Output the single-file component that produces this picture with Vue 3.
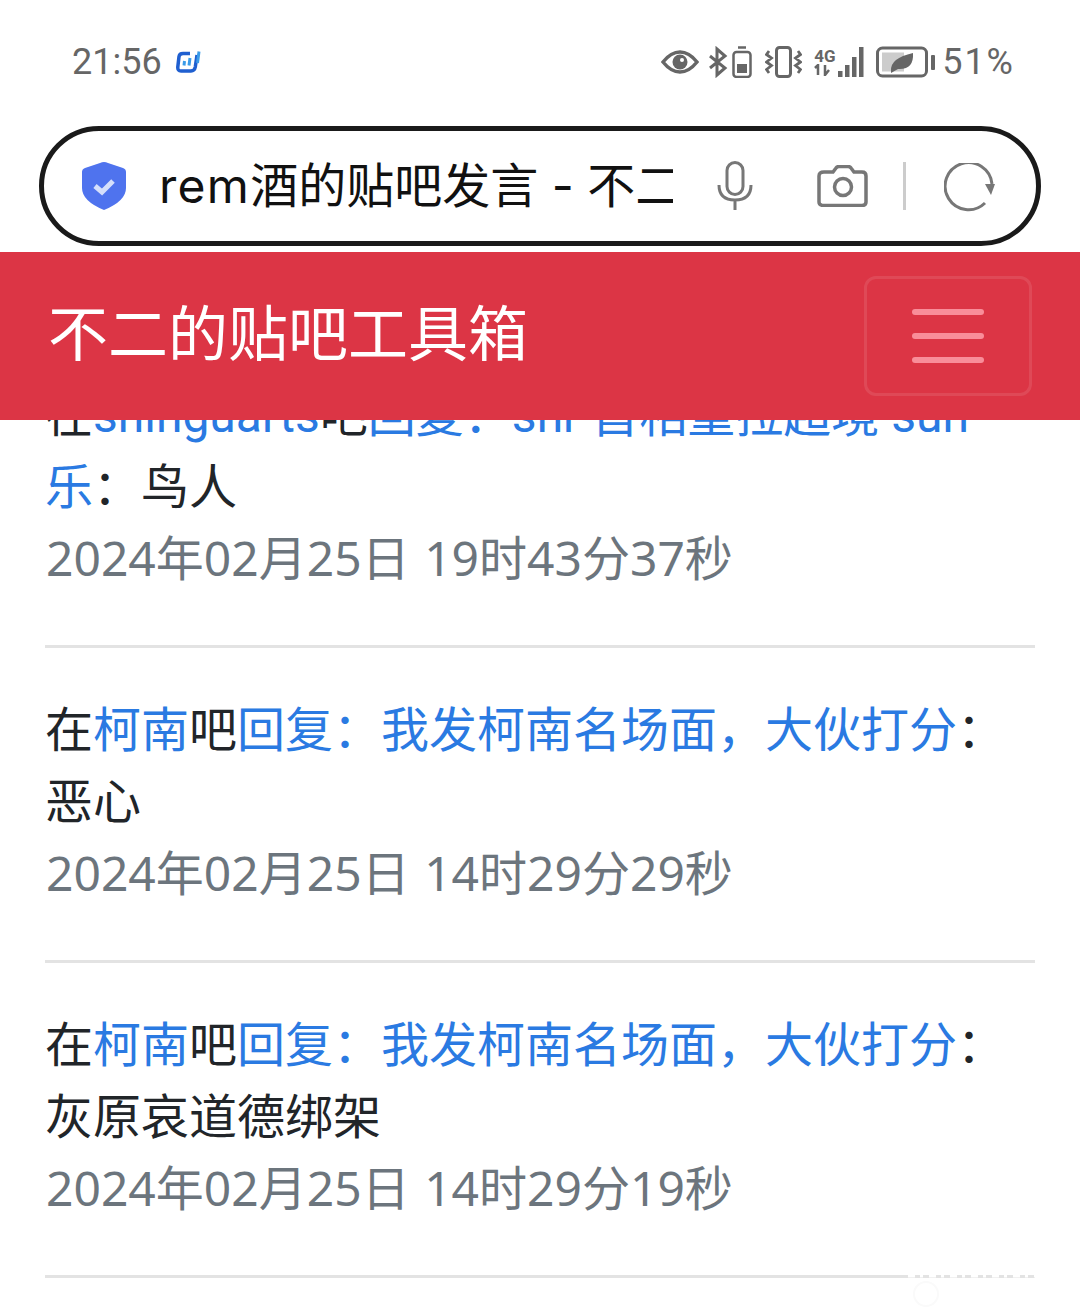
<template>
  <div class="page">
    <div class="status">
      <div class="status-left">
        <span class="time">21:56</span>
        <svg class="app-ic" width="25" height="24" viewBox="0 0 25 24" fill="none">
          <path d="M14 3.500H7Q3.500 3.500 3 6.500L1.800 17Q1.500 21 5 21H15Q18.500 21 19.300 17L21 5" stroke="#1f5fd0" stroke-width="3.500"/>
          <path d="M8.500 11L8 15.500M14 8L13 15.500" stroke="#3a9be8" stroke-width="3"/>
          <path d="M23 1.500L21.500 13" stroke="#3a9be8" stroke-width="3"/>
        </svg>
      </div>
      <div class="status-right">
        <svg width="38" height="26" viewBox="0 0 38 26" fill="none">
          <path d="M2 13Q10 3 19 3T36 13Q28 23 19 23T2 13z" stroke="#666" stroke-width="3.500"/>
          <circle cx="19" cy="13" r="7.500" fill="#666"/>
          <circle cx="21" cy="11" r="2" fill="#fff"/>
        </svg>
        <svg class="ic-bt" width="20" height="32" viewBox="0 0 20 32" fill="none">
          <path d="M2 10l15 12-8 7V3l8 7L2 22" stroke="#666" stroke-width="3"/>
        </svg>
        <svg class="ic-batt" width="20" height="32" viewBox="0 0 20 32" fill="none">
          <path d="M6 1.500h8" stroke="#666" stroke-width="2.500"/>
          <rect x="1.500" y="6" width="17" height="25" rx="3" stroke="#666" stroke-width="2.500"/>
          <rect x="5" y="18" width="10" height="9" fill="#666"/>
        </svg>
        <svg class="ic-vib" width="37" height="32" viewBox="0 0 37 32" fill="none">
          <rect x="11.500" y="1.500" width="14" height="29" rx="3" stroke="#666" stroke-width="3"/>
          <path d="M4 5L1.500 8.500l5 3.500-5 4 5 3.500-5 4L4 27M33 5l2.500 3.500-5 3.500 5 4-5 3.500 5 4L33 27" stroke="#666" stroke-width="2.800"/>
        </svg>
        <div class="signal">
          <div class="net">
            <span class="net-4g">4G</span>
            <svg width="20" height="12" viewBox="0 0 20 12" fill="none">
              <path d="M4 11V1L1 4M11 1v10l4-5" stroke="#666" stroke-width="2.500"/>
            </svg>
          </div>
          <svg class="bars" width="26" height="32" viewBox="0 0 26 32" fill="#666">
            <rect x="0" y="25" width="4.500" height="6"/>
            <rect x="7" y="19" width="4.500" height="12"/>
            <rect x="14" y="11" width="4.500" height="20"/>
            <rect x="21" y="1" width="4.500" height="30"/>
          </svg>
        </div>
        <svg class="ic-power" width="60" height="32" viewBox="0 0 60 32" fill="none">
          <rect x="1.500" y="2" width="49" height="28" rx="5" stroke="#666" stroke-width="3"/>
          <rect x="6" y="6.500" width="22" height="19" fill="#ccc"/>
          <path d="M15 25Q14 12 37 7 38 24 22 23L15 27z" fill="#666"/>
          <rect x="55" y="9" width="4" height="15" rx="1" fill="#666"/>
        </svg>
        <span class="pct">51%</span>
      </div>
    </div>
    <div class="addr-wrap">
      <div class="addr">
        <svg class="shield" width="46" height="50" viewBox="0 0 46 50">
          <path d="M23 1Q25 1 27 2L42 7Q45 8 45 11V27Q45 40 23 49Q1 40 1 27V11Q1 8 4 7L19 2Q21 1 23 1z" fill="#4f73ee"/>
          <path d="M14 25l7 6 11-11" fill="none" stroke="#d5dffb" stroke-width="5"/>
        </svg>
        <div class="addr-text"><span class="latin">rem</span>酒的贴吧发言 - 不二的贴吧工具箱</div>
        <svg class="mic" width="36" height="50" viewBox="0 0 36 50" fill="none">
          <rect x="10" y="1.500" width="16" height="32" rx="8" stroke="#777" stroke-width="3"/>
          <path d="M2 24q0 15 16 15t16-15M18 39v10" stroke="#777" stroke-width="3"/>
        </svg>
        <svg class="cam" width="52" height="42" viewBox="0 0 52 42" fill="none">
          <path d="M7 7h9l3-4q1-1.500 3-1.500h9q2 0 3 1.500l3 4h8q4 0 4 4v26q0 3.500-4 3.500H7q-5 0-5-3.500V11q0-4 5-4z" stroke="#777" stroke-width="3.500"/>
          <circle cx="26" cy="22" r="8.500" stroke="#777" stroke-width="3.500"/>
        </svg>
        <div class="sep"></div>
        <svg class="reload" width="52" height="50" viewBox="0 0 52 50" fill="none">
          <path d="M41 40A23.500 23.500 0 1 1 48 21" stroke="#777" stroke-width="3"/>
          <path d="M41 21h10l-4 11z" fill="#777"/>
        </svg>
      </div>
    </div>
    <nav class="navbar">
      <span class="brand">不二的贴吧工具箱</span>
      <button class="toggler">
        <span class="bar"></span>
        <span class="bar"></span>
        <span class="bar"></span>
      </button>
    </nav>
    <div class="list">
      <div v-for="(item, i) in items" :key="i" class="item">
        <div class="body">在<a>{{ item.forum }}</a>吧<a>回复：{{ item.title }}</a>：{{ item.text }}</div>
        <div class="date">{{ item.date }}</div>
      </div>
    </div>
    <svg class="mark" width="130" height="40" viewBox="0 0 130 40" fill="none">
      <path d="M0 2H127" stroke="#fff" stroke-width="3" stroke-dasharray="7 5 3 6"/>
      <circle cx="18" cy="20" r="12" stroke="#fafafa" stroke-width="2"/>
    </svg>
  </div>
</template>

<script setup>
const items = [
  { forum: 'shinguarts', title: 'shr 首相重拉超境 sun乐', text: '鸟人', date: '2024年02月25日 19时43分37秒' },
  { forum: '柯南', title: '我发柯南名场面，大伙打分', text: '恶心', date: '2024年02月25日 14时29分29秒' },
  { forum: '柯南', title: '我发柯南名场面，大伙打分', text: '灰原哀道德绑架', date: '2024年02月25日 14时29分19秒' }
]
</script>

<style>
html, body {
  margin: 0;
  background: #fff;
}
</style>

<style scoped>
.page {
  position: relative;
  width: 1080px;
  height: 1313px;
  overflow: hidden;
  background: #fff;
  font-family: Roboto, "Noto Sans CJK SC", sans-serif;
}

.status {
  height: 126px;
  box-sizing: border-box;
  padding: 40px 65px 0 72px;
  display: flex;
  justify-content: space-between;
  align-items: flex-start;
}

.status-left {
  display: flex;
  align-items: center;
  height: 44px;
  gap: 14px;
}

.time {
  font-size: 36px;
  color: #666;
}

.status-right {
  display: flex;
  align-items: center;
  height: 44px;
}

.ic-bt {
  margin-left: 9px;
}

.ic-batt {
  margin-left: 4px;
}

.ic-vib {
  margin-left: 13px;
}

.signal {
  display: flex;
  align-items: center;
  margin-left: 12px;
}

.net {
  width: 22px;
  display: flex;
  flex-direction: column;
  align-items: flex-start;
  line-height: 16px;
}

.net-4g {
  font-size: 17px;
  font-weight: 700;
  color: #666;
}

.bars {
  margin-left: 2px;
}

.ic-power {
  margin-left: 12px;
}

.pct {
  font-size: 36px;
  color: #666;
  margin-left: 6px;
  letter-spacing: 2px;
}

.addr-wrap {
  height: 126px;
  padding: 0 39px;
}

.addr {
  box-sizing: border-box;
  height: 120px;
  border: 5px solid #1a1a1a;
  border-radius: 60px;
  display: flex;
  align-items: center;
  padding: 0 44px 0 37px;
  background: #fff;
}

.shield {
  flex: none;
}

.addr-text {
  width: 514px;
  margin-left: 32px;
  padding-bottom: 8px;
  flex: none;
  font-family: Inter, "Noto Sans CJK SC", sans-serif;
  font-size: 48px;
  color: #111;
  white-space: nowrap;
  overflow: hidden;
}

.latin {
  letter-spacing: 1.300px;
}

.mic {
  flex: none;
  margin-left: 44px;
}

.cam {
  flex: none;
  margin-left: 64px;
}

.sep {
  flex: none;
  width: 3px;
  height: 48px;
  margin-left: 34px;
  background: #ccc;
}

.reload {
  flex: none;
  margin-left: 38px;
  margin-top: 4px;
}

.navbar {
  position: relative;
  z-index: 2;
  height: 168px;
  box-sizing: border-box;
  background: #dc3545;
  display: flex;
  align-items: center;
  justify-content: space-between;
  padding: 0 48px;
}

.brand {
  font-size: 60px;
  color: #fff;
  padding-bottom: 14px;
}

.toggler {
  box-sizing: border-box;
  width: 168px;
  height: 120px;
  background: transparent;
  border: 3px solid rgba(255, 255, 255, 0.1);
  border-radius: 12px;
  display: flex;
  flex-direction: column;
  align-items: center;
  justify-content: center;
  gap: 18px;
  padding: 0;
}

.bar {
  width: 72px;
  height: 6px;
  border-radius: 3px;
  background: #f98d99;
}

.list {
  margin-top: -87px;
  padding: 0 45px;
}

.item {
  height: 315px;
  box-sizing: border-box;
  padding-top: 47px;
  border-bottom: 3px solid #e3e3e3;
}

.body {
  font-size: 48px;
  line-height: 72px;
  color: #212529;
}

.body a {
  color: #2a7ae2;
}

.date {
  margin-top: -2px;
  margin-left: 1px;
  font-family: "Noto Sans", "Noto Sans CJK SC", sans-serif;
  font-size: 48px;
  line-height: 72px;
  word-spacing: 2px;
  color: #6c757d;
}

.mark {
  position: absolute;
  left: 908px;
  top: 1274px;
}
</style>
